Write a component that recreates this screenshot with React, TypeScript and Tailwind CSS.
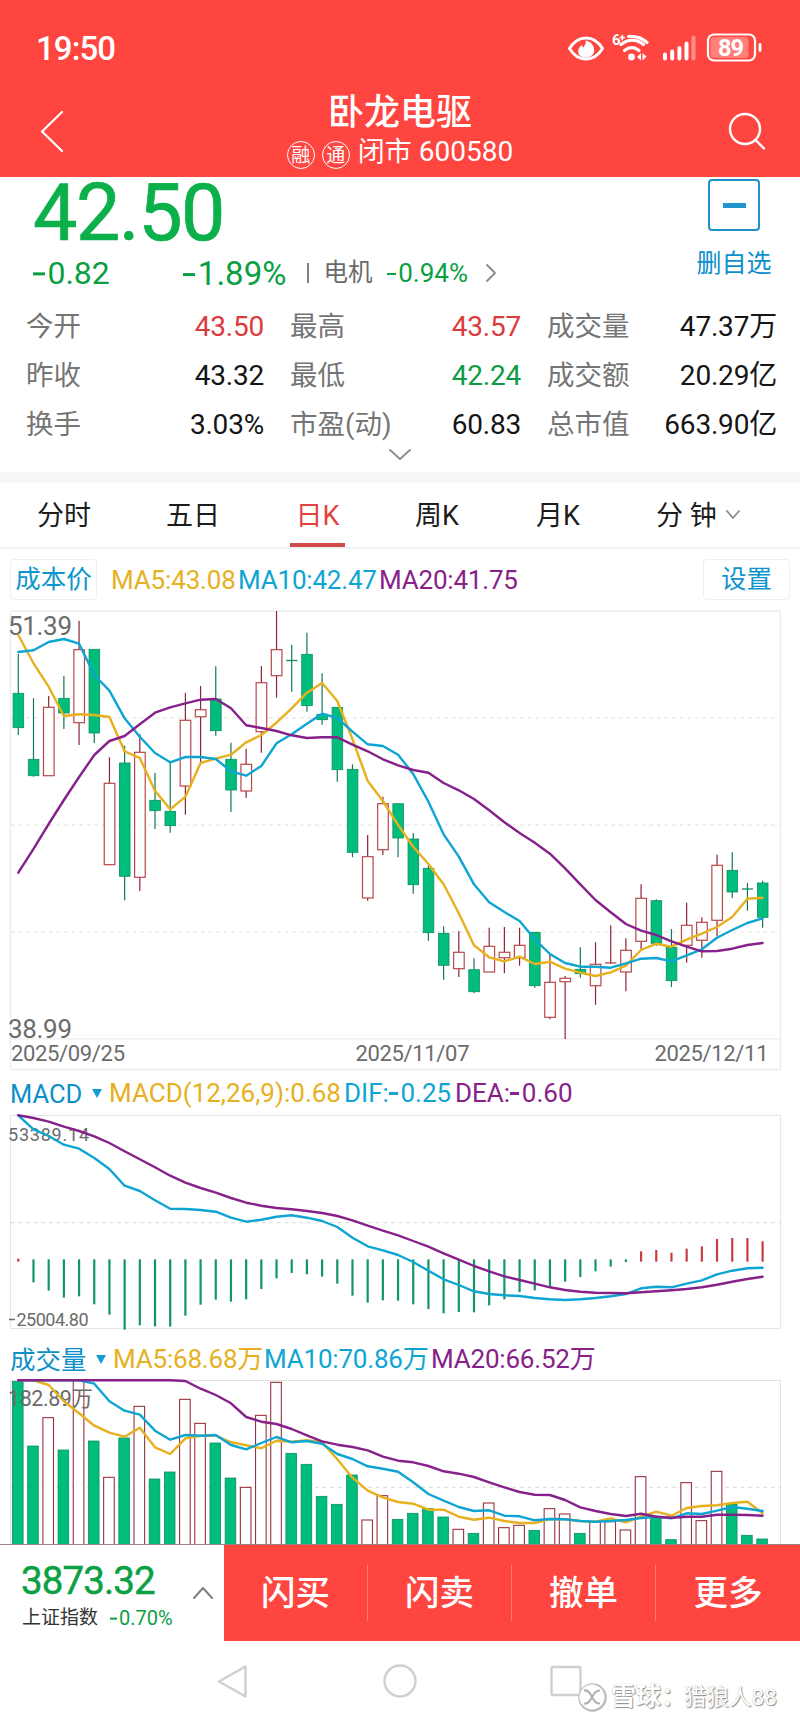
import React from "react";

type Candle = [high: number, top: number, bottom: number, low: number, up: 0 | 1];

const STEP = 15.19;
const X0 = 18.3;
const xAt = (i: number) => X0 + i * STEP;

const GREEN = "#00bd7b";
const GREEN_EDGE = "#0a8f62";
const RED = "#b8474b";
const WICK_GREEN = "#12775a";
const WICK_RED = "#8e2433";
const YELLOW = "#e6b01e";
const BLUE = "#0ea5d3";
const PURPLE = "#87218a";

const CANDLES: Candle[] = [
  [654, 693.3, 727.7, 735, 0], [698.3, 759.3, 775.7, 776.7, 0], [696, 707.3, 775.7, 775.7, 1], [676, 698.3, 713, 729, 0],
  [620.7, 649.7, 722.7, 745, 1], [649.3, 649.3, 733, 743, 0], [757.3, 783.3, 864.7, 864.7, 1], [745.7, 763, 876.3, 900.3, 0],
  [734, 752.3, 877.3, 891, 1], [773, 800.3, 810.7, 829, 0], [762.3, 811.3, 825.7, 832.7, 0], [693, 720.3, 786, 814.7, 1],
  [686, 709.7, 716.7, 762, 1], [666.3, 699, 730.7, 735.7, 0], [742.7, 759.3, 790, 812, 0], [748.7, 764.3, 791, 798, 1],
  [666, 682.7, 731.7, 752.7, 1], [611, 649.7, 675.7, 697.7, 1], [644.7, 660, 660.6, 691.7, 0], [632.7, 654.3, 705.7, 711.7, 0],
  [673.3, 714.3, 719.7, 724.7, 0], [707, 707.3, 769.7, 781.7, 0], [764.3, 769.3, 852.3, 857.3, 0], [835, 856.7, 898, 900.7, 1],
  [796.7, 803.7, 849.7, 855, 1], [803.7, 803.7, 838, 857.3, 0], [833.3, 839, 884.7, 893.7, 0], [865.7, 868.3, 932.7, 940.7, 0],
  [926.3, 933.3, 965.3, 979.7, 0], [931, 952.3, 968.7, 977, 1], [958.3, 969.7, 991.7, 993.3, 0], [927.7, 946.3, 972, 972, 1],
  [927, 952.3, 957.7, 973.3, 1], [927.7, 945.3, 957.7, 965.7, 1], [932, 932.3, 985.7, 987.7, 0], [954.7, 982.3, 1017.3, 1019.3, 1],
  [976, 978.3, 981.7, 1039, 1], [947.3, 969.3, 973.7, 977.7, 0], [942.3, 964.3, 985.7, 1004.7, 1], [925.3, 962.4, 963, 964, 1],
  [938.3, 950.3, 972, 991.3, 1], [884.3, 898.3, 941.3, 949, 1], [899.3, 900.7, 943.3, 946, 0], [929, 947.3, 980.7, 987, 0],
  [902.7, 925.3, 945.3, 962.7, 1], [917.3, 922.3, 940.3, 957.7, 1], [854.7, 865.3, 920.3, 936.3, 1], [852.3, 870.3, 892, 898, 0],
  [883, 888.5, 889, 910.7, 0], [880.7, 883, 917.3, 927.7, 0],
];

const K_MA5 = [635, 663.3, 686.7, 716, 714.3, 715, 717, 751.3, 758, 790.7, 809.3, 796.7, 763, 758.7, 754.7, 742.3, 735, 722.7, 708.3, 692.7, 683, 701, 739.3, 781, 801, 825, 846.7, 864, 884.3, 913.3, 945.3, 957.3, 961.3, 956.7, 964, 961.7, 968.7, 972.7, 976, 972.3, 965.7, 950, 943.7, 946.7, 939.7, 933.7, 927, 917, 898.7, 897.7];
const K_MA10 = [652, 650.3, 642, 639, 643.7, 675, 690.7, 718.3, 736.7, 753, 762.3, 757, 757, 759, 771.3, 775.7, 766, 743.3, 734.3, 723.7, 713.7, 718, 731.7, 744.3, 746, 754.7, 774, 801.7, 834.3, 856.7, 884.3, 902.3, 912, 921, 939.3, 954, 963, 966.7, 966.7, 967.7, 963.3, 958.7, 958, 961.3, 955.3, 949.3, 937.7, 930, 923, 918.3];
const K_MA20 = [872.7, 848.9, 824, 800, 777, 755, 741, 736, 724.3, 712.7, 707.3, 703.3, 699.7, 699, 708.3, 725.3, 728, 731, 735.3, 738, 737.3, 737.3, 744.7, 751.3, 759.3, 765.3, 770, 772.7, 783, 790.3, 799, 810.3, 822.3, 833, 842.7, 853.7, 868.3, 884.3, 900, 912.3, 924, 930.7, 935, 941.3, 946.7, 951.3, 951, 948.7, 945, 943];

const MACD_BARS = [566, 637, 662, 683, 679, 703, 734, 779, 766, 769, 770, 737, 704, 689, 695, 688, 657, 625, 609, 613, 620, 641, 677, 698, 691, 692, 703, 717, 730, 726, 727, 706, 688, 666, 661, 648, 635, 621, 604, 590, 576, 544, 540, 548, 536, 529, 507, 504, 504, 514];
const DIF = [136, 178, 198, 224, 236, 264, 297, 347, 363, 391, 416, 417, 420, 425, 443, 455, 449, 440, 436, 443, 453, 471, 503, 529, 541, 555, 576, 602, 628, 645, 664, 672, 676, 678, 684, 688, 690, 688, 684, 679, 672, 655, 650, 652, 641, 631, 613, 602, 595, 593];
const DEA = [136, 144, 155, 170, 183, 199, 219, 244, 268, 292, 317, 338, 354, 368, 384, 398, 407, 414, 418, 423, 429, 438, 451, 467, 482, 496, 513, 530, 550, 569, 588, 604, 619, 630, 641, 652, 660, 665, 668, 669, 670, 667, 664, 661, 657, 652, 644, 635, 627, 620];

const VOLUME = [124, 318, 233, 330, 122, 303, 412, 294, 199, 417, 396, 178, 250, 309, 414, 442, 226, 127, 340, 373, 469, 493, 405, 540, 467, 538, 520, 506, 531, 568, 580, 489, 563, 556, 571, 506, 522, 580, 545, 545, 570, 410, 532, 599, 428, 542, 394, 493, 586, 597];
const V_MA5 = [121, 121, 135, 184, 220, 257, 278, 290, 263, 322, 342, 295, 287, 287, 307, 316, 325, 302, 305, 301, 307, 358, 413, 452, 472, 486, 491, 509, 509, 530, 539, 533, 543, 549, 549, 537, 538, 543, 545, 535, 547, 530, 515, 527, 504, 498, 496, 489, 485, 520];
const V_MA10 = [121, 121, 121, 121, 121, 131, 184, 212, 224, 272, 299, 285, 287, 285, 315, 328, 309, 291, 307, 303, 311, 342, 357, 379, 386, 395, 427, 462, 482, 501, 513, 511, 527, 529, 541, 537, 538, 543, 545, 543, 540, 534, 530, 535, 520, 522, 512, 501, 506, 513];
const V_MA20 = [121, 121, 121, 121, 121, 121, 121, 121, 121, 121, 121, 123, 146, 165, 190, 231, 245, 252, 267, 286, 304, 314, 321, 331, 350, 362, 367, 378, 394, 401, 411, 427, 442, 456, 464, 465, 480, 502, 513, 522, 528, 521, 530, 533, 530, 530, 524, 524, 525, 527];

function Line({ ys, map, color }: { ys: number[]; map: (v: number) => number; color: string }) {
  const points = ys.map((y, i) => `${xAt(i).toFixed(1)},${map(y).toFixed(1)}`).join(" ");
  return <polyline points={points} fill="none" stroke={color} strokeWidth={2.4} strokeLinejoin="round" strokeLinecap="round" />;
}

function Dashed({ y }: { y: number }) {
  return <line x1={11} x2={780} y1={y} y2={y} stroke="#dedede" strokeWidth={1.2} strokeDasharray="3.6 4" />;
}

function Label({ x, y, w, size, children }: { x: number; y: number; w: number; size: number; children: string }) {
  return (
    <text x={x} y={y} textLength={w} fontSize={size} fill="#6b6b6b">
      {children}
    </text>
  );
}

function PriceChart() {
  const id = (v: number) => v;
  return (
    <svg className="block" width="800" height="461" viewBox="0 610 800 461">
      <path d="M10.5 1069.5V611.2H780.5V1069.5Z M10.5 1038.8H780.5" fill="none" stroke="#ececec" strokeWidth={1.3} />
      <Dashed y={718} />
      <Dashed y={825} />
      <Dashed y={932} />
      {CANDLES.map(([h, t, b, l, up], i) => {
        const x = xAt(i);
        const flat = b - t < 1;
        return (
          <g key={i}>
            {up ? (
              <path d={`M${x} ${h}V${t}M${x} ${b}V${l}`} stroke={WICK_RED} strokeWidth={1.2} />
            ) : (
              <path d={`M${x} ${h}V${l}`} stroke={WICK_GREEN} strokeWidth={1.2} />
            )}
            {flat ? (
              <path d={`M${x - 5.6} ${t + 0.5}H${x + 5.6}`} stroke={up ? RED : GREEN_EDGE} strokeWidth={1.3} />
            ) : (
              <rect x={x - 5.2} y={t} width={10.6} height={b - t} fill={up ? "#ffffff" : GREEN} stroke={up ? RED : GREEN_EDGE} strokeWidth={up ? 1.2 : 0.8} />
            )}
          </g>
        );
      })}
      <Label x={8} y={635} w={64} size={26}>51.39</Label>
      <Label x={8} y={1038} w={64} size={26}>38.99</Label>
      <Label x={11} y={1061} w={114} size={22}>2025/09/25</Label>
      <Label x={355.5} y={1061} w={114} size={22}>2025/11/07</Label>
      <Label x={654.5} y={1061} w={114} size={22}>2025/12/11</Label>
      <Line ys={K_MA5} map={id} color={YELLOW} />
      <Line ys={K_MA10} map={id} color={BLUE} />
      <Line ys={K_MA20} map={id} color={PURPLE} />
    </svg>
  );
}

function MacdChart() {
  const y = (v: number) => 1070 + v / 3;
  return (
    <svg className="block" width="800" height="217" viewBox="0 1114 800 217">
      <rect x={10.5} y={1115.5} width={770} height={213} fill="none" stroke="#e6e6e6" strokeWidth={1.1} />
      <Dashed y={1222.7} />
      {MACD_BARS.map((v, i) => {
        const red = i === 0 || i > 40;
        return <line key={i} x1={xAt(i)} x2={xAt(i)} y1={y(red ? 575 : 568)} y2={y(v)} stroke={red ? "#c93c40" : "#12956a"} strokeWidth={2.2} />;
      })}
      <Label x={8} y={1140.5} w={81} size={18}>53389.14</Label>
      <Line ys={DIF} map={y} color={BLUE} />
      <Line ys={DEA} map={y} color={PURPLE} />
      <path d="M9 1319.5h6" stroke="#6b6b6b" strokeWidth={1.5} />
      <Label x={16.5} y={1325.5} w={72} size={18}>25004.80</Label>
    </svg>
  );
}

function VolumeChart() {
  const y = (v: number) => 1340 + v / 3;
  return (
    <svg className="block" width="800" height="165" viewBox="0 1379 800 165">
      <path d="M10.5 1546V1380.5H780.5V1546" fill="none" stroke="#e2e2e2" strokeWidth={1.1} />
      <Dashed y={1487.3} />
      {VOLUME.map((v, i) => {
        const up = CANDLES[i][4];
        return (
          <rect key={i} x={xAt(i) - 5.8} y={y(v)} width={10.6} height={1550 - y(v)} fill={up ? "#ffffff" : GREEN} stroke={up ? "#97343e" : GREEN_EDGE} strokeWidth={up ? 1.1 : 0.8} />
        );
      })}
      <Label x={8} y={1406} w={85} size={21.5}>182.89万</Label>
      <Line ys={V_MA5} map={y} color={YELLOW} />
      <Line ys={V_MA10} map={y} color={BLUE} />
      <Line ys={V_MA20} map={y} color={PURPLE} />
    </svg>
  );
}

function StatusIcons() {
  return (
    <svg className="block" width="200" height="34" viewBox="566 31 200 34" fill="none" stroke="#fff">
      <path d="M569.5 48.5C574 41 580 38 586 38s12 3 16.500 10.500C598 56 592 59 586 59s-12-3-16.500-10.500Z" strokeWidth="2.900" />
      <path d="M585.500 40.500c.9 3.400-1.200 4.800-1.900 7-1-.6-1.500-1.400-1.500-2.600-2.400 1.700-4 3.800-4 6.300 0 4 3.500 6.300 7.900 6.300s8.200-2.800 8.200-7.300c0-4.600-3.200-8.700-8.700-9.700Z" fill="#fff" stroke="none" />
      <text x="612" y="45" fontSize="15" fontWeight="700" fill="#fff" stroke="none" textLength="7">6</text>
      <path d="M619.500 37.500h5.500M622.300 34.700v5.600" strokeWidth="1.700" />
      <path d="M628.500 36.500c7-.5 13.500 1.500 18.500 6M621 44.500c7-5.500 15.500-5.500 22.500 0M624.500 50.500c4.600-3.600 10-3.600 14.500 0" strokeWidth="3.200" strokeLinecap="round" />
      <circle cx="631.500" cy="57" r="3.400" fill="#fff" stroke="none" />
      <path d="M641 53v7.500l-4-3.500ZM642.500 53v7.500l4-4Z" fill="#fff" stroke="none" />
      <g strokeWidth="4" strokeLinecap="round">
        <path d="M665 54.500v4M672.200 51.500v7M679.400 48v10.500M686.500 43.500v15" />
        <path d="M693.500 37.500v21" stroke="#ff8f8a" />
      </g>
      <rect x="708" y="34.500" width="47" height="26" rx="6" strokeWidth="2.200" />
      <rect x="710.500" y="37" width="38" height="21" rx="3.500" fill="#ff8079" stroke="none" />
      <path d="M760 44.500v6" strokeWidth="2.800" strokeLinecap="round" />
      <text x="718" y="56" fontSize="23.500" fontWeight="700" fill="#fff" stroke="none" textLength="26">89</text>
    </svg>
  );
}

function Badge({ children }: { children: string }) {
  return <span className="mt-1.5 flex h-7 w-7 items-center justify-center rounded-full border border-white text-[19px] leading-none">{children}</span>;
}

function Chevron({ w, h, d, color = "#8a8a8a", sw = 1.8, className = "" }: { w: number; h: number; d: string; color?: string; sw?: number; className?: string }) {
  return (
    <svg className={`block shrink-0 ${className}`} width={w} height={h} viewBox={`0 0 ${w} ${h}`} fill="none" stroke={color} strokeWidth={sw} strokeLinecap="round" strokeLinejoin="round">
      <path d={d} />
    </svg>
  );
}

function Header() {
  return (
    <header className="h-[177px] bg-[#ff4540] text-white">
      <div className="flex h-[82px] items-start justify-between pt-[31px] pr-[34px] pl-[36px]">
        <span className="text-[33px] leading-[35px] font-medium tracking-[-0.9px]">19:50</span>
        <StatusIcons />
      </div>
      <div className="flex h-[95px] justify-between">
        <Chevron w={24} h={42} d="M22 2 2 21.500 22 41" color="#fff" sw={2.2} className="mt-[28px] ml-[40px]" />
        <div className="flex flex-col items-center pt-[13px] pl-[9px]">
          <h1 className="text-[36px] leading-[36px] font-medium">卧龙电驱</h1>
          <div className="mt-[7px] flex h-[28px] items-center">
            <Badge>融</Badge>
            <span className="w-[7px]" />
            <Badge>通</Badge>
            <span className="ml-[8px] text-[27px] leading-none">闭市</span>
            <span className="ml-[7px] text-[28px] leading-none">600580</span>
          </div>
        </div>
        <svg className="mt-[29px] mr-[33px] block" width="40" height="40" viewBox="727 111 40 40" fill="none" stroke="#fff" strokeWidth="2.400" strokeLinecap="round">
          <circle cx="745" cy="129" r="15" />
          <path d="m755.500 140 8.500 8.500" />
        </svg>
      </div>
    </header>
  );
}

const QUOTES: [string, string, string][][] = [
  [["今开", "43.50", "text-[#dd3b3b]"], ["最高", "43.57", "text-[#dd3b3b]"], ["成交量", "47.37万", "text-[#151515]"]],
  [["昨收", "43.32", "text-[#151515]"], ["最低", "42.24", "text-[#0d9c46]"], ["成交额", "20.29亿", "text-[#151515]"]],
  [["换手", "3.03%", "text-[#151515]"], ["市盈(动)", "60.83", "text-[#151515]"], ["总市值", "663.90亿", "text-[#151515]"]],
];

function Minus() {
  return <span className="mr-[0.09em] inline-block h-[0.09em] w-[0.36em] -translate-y-[0.27em] bg-current" />;
}

function Quote() {
  return (
    <section className="h-[295px] bg-white">
      <div className="flex h-[120px] justify-between">
        <div>
          <div className="mt-[5px] h-[62px] pl-[33px] text-[79px] leading-[62px] tracking-[-1.5px] text-[#0bb04b] [-webkit-text-stroke:0.7px_#0bb04b]">42.50</div>
          <div className="mt-[12px] flex h-[34px] items-center text-[#0a9f43]">
            <span className="w-[150px] pl-[33px] text-[32px] leading-none"><Minus />0.82</span>
            <span className="w-[157px] pl-[33px] text-[33px] leading-none"><Minus />1.89%</span>
            <span className="h-[20px] w-[1.5px] bg-[#808080]" />
            <span className="ml-[15px] text-[24.500px] leading-none text-[#6a6a6a]">电机</span>
            <span className="ml-[14px] w-[98px] text-[26px] leading-none"><Minus />0.94%</span>
            <Chevron w={12} h={20} d="M2 2 10 10 2 18" />
          </div>
        </div>
        <div className="flex w-[132px] flex-col items-center">
          <div className="mt-[2px] flex h-[52px] w-[52px] items-center justify-center rounded-[4px] border-2 border-[#1f90c8]">
            <span className="h-[5px] w-[23px] bg-[#2196cc]" />
          </div>
          <span className="mt-[20px] text-[25px] leading-none text-[#0d8fca]">删自选</span>
        </div>
      </div>
      <div className="pt-[5px]">
        {QUOTES.map((row, r) => (
          <div key={r} className="grid h-[49.300px] grid-cols-[238px_231px_230px] items-center gap-x-[26px] pl-[26px] leading-none">
            {row.map(([name, value, color]) => (
              <div key={name} className="flex items-center justify-between">
                <span className="text-[27.500px] text-[#757575]">{name}</span>
                <span className={`${color} text-[28px] tracking-[-0.2px]`}>{value}</span>
              </div>
            ))}
          </div>
        ))}
      </div>
      <div className="-mt-[2px] flex justify-center">
        <Chevron w={24} h={13} d="M2 2 12 11 22 2" />
      </div>
    </section>
  );
}

function Tabs() {
  return (
    <nav className="flex h-[66px] items-center border-b-2 border-[#f1f1f1] bg-white pt-[2px] text-[27px] leading-none text-[#1c1c1c]">
      <span className="ml-[37px] w-[129px]">分时</span>
      <span className="w-[124px]">五日</span>
      <span className="relative flex h-full w-[55px] items-center justify-center text-[#e04440]">
        日K
        <span className="absolute inset-x-0 bottom-0 h-[4px] bg-[#d04a4a]" />
      </span>
      <span className="ml-[70px] w-[121px]">周K</span>
      <span className="w-[120px]">月K</span>
      <span className="mr-[9px]">分 钟</span>
      <Chevron w={14} h={10} d="M1 1 7 8 13 1" className="-mt-0.5" />
    </nav>
  );
}

function Pill({ className, children }: { className: string; children: string }) {
  return <span className={`flex h-[41px] items-center justify-center rounded-[4px] border border-[#efefef] text-[25.500px] text-[#0d95cc] ${className}`}>{children}</span>;
}

function Bottom() {
  return (
    <footer className="flex h-[97px] border-t border-[#a08080] bg-white">
      <div className="flex w-[224px] items-center justify-between pt-[4px] pr-[11px] pl-[21px]">
        <div>
          <div className="text-[38.500px] leading-[38px] tracking-[-0.9px] text-[#0ca045] [-webkit-text-stroke:0.5px_#0ca045]">3873.32</div>
          <div className="mt-[7px] flex items-center leading-[22px]">
            <span className="w-[89px] pl-px text-[19px] text-[#333]">上证指数</span>
            <span className="text-[20px] text-[#0ca045]"><Minus />0.70%</span>
          </div>
        </div>
        <Chevron w={20} h={13} d="M1 12 10 2 19 12" color="#808080" sw={2} className="-mt-[6px]" />
      </div>
      <div className="grid h-[96px] flex-1 grid-cols-4 bg-[#ff4540] text-white">
        {["闪买", "闪卖", "撤单", "更多"].map((label, i) => (
          <div key={label} className={`my-[20px] flex items-center justify-center text-[34.500px] leading-none font-medium ${i < 3 ? "border-r border-[#ff7a72]" : ""}`}>{label}</div>
        ))}
      </div>
    </footer>
  );
}

function SystemNav() {
  return (
    <div className="relative h-[81px] bg-white">
      <svg className="block" width="800" height="81" viewBox="0 1641 800 81" fill="none" stroke="#cfcfcf" strokeWidth="2.400" strokeLinejoin="round">
        <path d="M245.500 1666.500V1696.500L219 1681.500Z" />
        <circle cx="400" cy="1681" r="15.500" />
        <rect x="551.500" y="1667" width="29" height="28" rx="1.500" />
        <circle cx="592.500" cy="1697.500" r="13" stroke="#b5b5b5" strokeWidth="2.400" />
        <circle cx="592" cy="1697" r="12.500" fill="#fff" stroke="#e4e4e4" strokeWidth="1" />
        <path d="M584 1690.500c5-1 6 3.500 8 6.500s3 7 8 6.500M600 1690.500c-5 0-6 3.500-8 6.500s-3 7.500-8 6.500" stroke="#b0b0b0" strokeWidth="2" />
      </svg>
      <div className="absolute top-[41px] left-[611px] flex items-center text-[25px] leading-[30px] text-white [text-shadow:1px_1px_1px_#8d8d8d,0_0_1px_#aaa]">
        <span className="w-[73px] font-bold whitespace-nowrap">雪球：</span>
        <span className="text-[22.500px] whitespace-nowrap">猎狼人88</span>
      </div>
    </div>
  );
}

export default function App() {
  return (
    <main className="w-[800px] overflow-hidden bg-white [font-family:Roboto,'Noto_Sans_CJK_SC',sans-serif]">
      <Header />
      <Quote />
      <div className="h-[11px] bg-[#f7f7f7]" />
      <Tabs />
      <div className="flex h-[61px] items-center pr-[10px] pl-[10px] text-[26px] leading-none">
        <Pill className="w-[87px]">成本价</Pill>
        <span className="ml-[14px] w-[127px] tracking-[-0.15px] text-[#e6b01e]">MA5:43.08</span>
        <span className="w-[141px] tracking-[-0.2px] text-[#0ea5d3]">MA10:42.47</span>
        <span className="tracking-[-0.2px] text-[#87218a]">MA20:41.75</span>
        <Pill className="ml-auto w-[87px]">设置</Pill>
      </div>
      <PriceChart />
      <div className="flex h-[43px] items-center pl-[10px] text-[26px] leading-none whitespace-nowrap">
        <span className="mt-1 w-[82px] text-[25.500px] text-[#0d8fca]">MACD</span>
        <svg className="mt-0.5 block" width="10" height="9" viewBox="0 0 10 9"><path d="M0 0H10L5 9Z" fill="#149bd5" /></svg>
        <span className="ml-[7px] w-[235px] text-[#e6b01e]">MACD(12,26,9):0.68</span>
        <span className="w-[111px] text-[#0ea5d3]">DIF:<Minus />0.25</span>
        <span className="text-[#87218a]">DEA:<Minus />0.60</span>
      </div>
      <MacdChart />
      <div className="flex h-[48px] items-center pt-[7px] pl-[10px] text-[26px] leading-none whitespace-nowrap">
        <span className="mt-1 w-[86px] text-[25.500px] text-[#0d8fca]">成交量</span>
        <svg className="mt-0.5 block" width="10" height="9" viewBox="0 0 10 9"><path d="M0 0H10L5 9Z" fill="#149bd5" /></svg>
        <span className="ml-[7px] w-[151px] tracking-[-0.2px] text-[#e6b01e]">MA5:68.68万</span>
        <span className="w-[167px] tracking-[-0.2px] text-[#0ea5d3]">MA10:70.86万</span>
        <span className="tracking-[-0.2px] text-[#87218a]">MA20:66.52万</span>
      </div>
      <VolumeChart />
      <Bottom />
      <SystemNav />
    </main>
  );
}
